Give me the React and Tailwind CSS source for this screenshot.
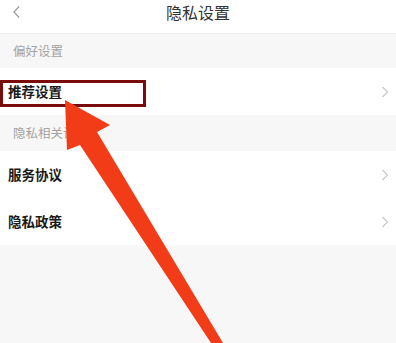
import React from 'react';

const font = { fontFamily: '"Noto Sans CJK SC", "Noto Sans", sans-serif' };

const Chevron = () => (
    <svg width="8" height="12" viewBox="0 0 8 12" className="text-[#c8c8c8]">
        <path d="M1.5 1 L6.5 6 L1.5 11" fill="none" stroke="currentColor" strokeWidth="1.2" />
    </svg>
);

const Row = ({ label }) => (
    <div className="h-[47px] flex items-center justify-between pl-2 pr-[7px] bg-white">
        <span className="text-[13.5px] font-bold text-[#1a1a1a]">{label}</span>
        <Chevron />
    </div>
);

const SectionTitle = ({ children, h }) => (
    <div className={`${h} flex items-center pl-[13px] text-[12.5px] text-[#a3a3a3]`}>{children}</div>
);

const App = () => {
    return (
        <div className="relative w-[396px] h-[343px] overflow-hidden bg-[#f7f7f7]" style={font}>
            <div className="h-[34px] bg-white relative border-b border-[#efefef]">
                <svg width="10" height="14" viewBox="0 0 10 14" className="absolute left-[12px] top-[5px] text-[#9a9a9a]">
                    <path d="M7 1.5 L2 7 L7 12.5" fill="none" stroke="currentColor" strokeWidth="1.2" />
                </svg>
                <div className="absolute inset-x-0 top-0 h-[24px] flex items-center justify-center text-[16px] text-[#333]">
                    隐私设置
                </div>
            </div>

            <SectionTitle h="h-[34px]">偏好设置</SectionTitle>
            <Row label="推荐设置" />

            <SectionTitle h="h-[36px]">隐私相关设置</SectionTitle>
            <Row label="服务协议" />
            <Row label="隐私政策" />

            {/* annotation box */}
            <div className="absolute left-0 top-[80px] w-[146px] h-[27px] border-[3px] border-[#7a0b0b]" />

            {/* annotation arrow */}
            <svg className="absolute inset-0" width="396" height="343" viewBox="0 0 396 343">
                <polygon
                    points="65,100 110,125 97,132 223,343 211,343 80,145 67,150"
                    fill="#f23b17"
                />
            </svg>
        </div>
    );
};

export default App;
